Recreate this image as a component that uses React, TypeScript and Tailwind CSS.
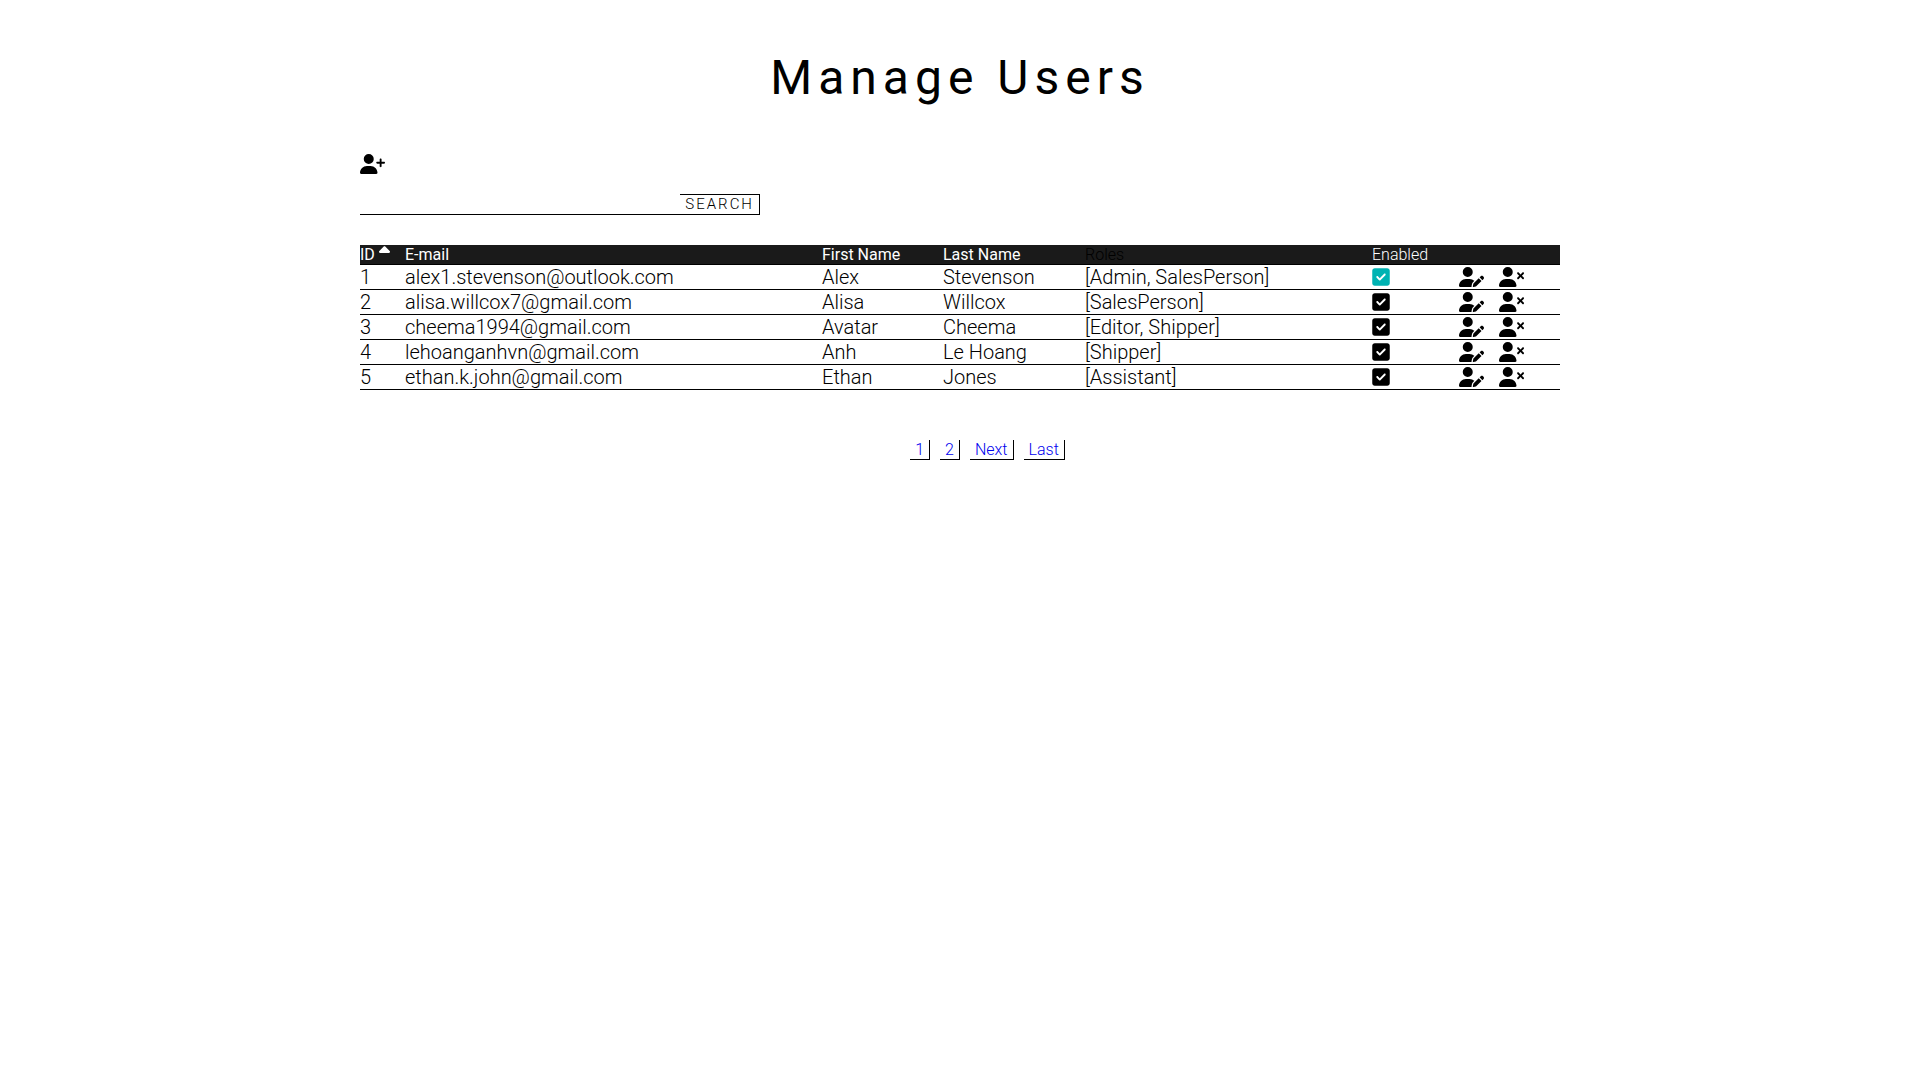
import { FaSquareCheck, FaSortUp, FaUserPen, FaUserPlus, FaUserXmark } from "react-icons/fa6";

type User = {
  id: number;
  email: string;
  firstName: string;
  lastName: string;
  roles: string;
  active?: boolean;
};

const users: User[] = [
  { id: 1, email: "alex1.stevenson@outlook.com", firstName: "Alex", lastName: "Stevenson", roles: "[Admin, SalesPerson]", active: true },
  { id: 2, email: "alisa.willcox7@gmail.com", firstName: "Alisa", lastName: "Willcox", roles: "[SalesPerson]" },
  { id: 3, email: "cheema1994@gmail.com", firstName: "Avatar", lastName: "Cheema", roles: "[Editor, Shipper]" },
  { id: 4, email: "lehoanganhvn@gmail.com", firstName: "Anh", lastName: "Le Hoang", roles: "[Shipper]" },
  { id: 5, email: "ethan.k.john@gmail.com", firstName: "Ethan", lastName: "Jones", roles: "[Assistant]" },
];

const pages = ["1", "2", "Next", "Last"];

function HeaderLink({ children }: { children: string }) {
  return (
    <a href="#" className="font-normal text-white">
      {children}
    </a>
  );
}

function UserRow({ user }: { user: User }) {
  return (
    <tr className="h-[25px] [&>td]:border-b [&>td]:border-black">
      <td>{user.id}</td>
      <td>{user.email}</td>
      <td>{user.firstName}</td>
      <td>{user.lastName}</td>
      <td>{user.roles}</td>
      <td>
        <label className="block w-fit cursor-pointer">
          <input type="checkbox" defaultChecked className="sr-only" aria-label={`Enabled ${user.email}`} />
          <FaSquareCheck className={user.active ? "h-5 w-[18px] text-[#00b3b3]" : "h-5 w-[18px]"} />
        </label>
      </td>
      <td>
        <div className="flex gap-[15px]">
          <a href="#" aria-label={`Edit ${user.email}`}>
            <FaUserPen className="h-5 w-[25px]" />
          </a>
          <a href="#" aria-label={`Delete ${user.email}`}>
            <FaUserXmark className="h-5 w-[25px]" />
          </a>
        </div>
      </td>
    </tr>
  );
}

export default function App() {
  return (
    <main className="mx-auto max-w-[1200px] bg-white pt-12 font-['Roboto',sans-serif] font-light text-black">
      <h1 className="text-center text-[48px] leading-[60px] font-normal tracking-[6px]">Manage Users</h1>

      <a href="#" aria-label="Add user" className="mt-[46px] block w-fit">
        <FaUserPlus className="h-5 w-[25px]" />
      </a>

      <form className="mt-5 flex w-[400px] text-[15px] leading-[19px]" onSubmit={(e) => e.preventDefault()}>
        <input type="text" aria-label="Search users" className="min-w-0 flex-1 border-b border-black outline-none" />
        <button type="submit" className="border-y border-r border-black px-[5px] tracking-[2px]">
          SEARCH
        </button>
      </form>

      <table className="mt-[30px] w-full table-fixed border-separate border-spacing-0 text-left text-xl leading-6">
        <colgroup>
          <col className="w-[45px]" />
          <col />
          <col className="w-[121px]" />
          <col className="w-[142px]" />
          <col className="w-[287px]" />
          <col className="w-[87px]" />
          <col className="w-[101px]" />
        </colgroup>
        <thead>
          <tr className="bg-[#1a1a1a] text-base leading-[19px] [&>th]:border-b [&>th]:border-black [&>th]:font-light">
            <th>
              <div className="flex h-[19px] gap-1">
                <HeaderLink>ID</HeaderLink>
                <FaSortUp className="h-[18px] w-[11px] text-white" />
              </div>
            </th>
            <th><HeaderLink>E-mail</HeaderLink></th>
            <th><HeaderLink>First Name</HeaderLink></th>
            <th><HeaderLink>Last Name</HeaderLink></th>
            <th>Roles</th>
            <th className="text-white">Enabled</th>
            <th aria-label="Actions" />
          </tr>
        </thead>
        <tbody>
          {users.map((user) => (
            <UserRow key={user.id} user={user} />
          ))}
        </tbody>
      </table>

      <nav aria-label="Pagination" className="mt-[50px] flex justify-center gap-[10px] pl-[55px] text-base leading-[19px]">
        {pages.map((page) => (
          <a key={page} href="#" className="border-r border-b border-black px-[5px] text-[#0000ee]">
            {page}
          </a>
        ))}
      </nav>
    </main>
  );
}
